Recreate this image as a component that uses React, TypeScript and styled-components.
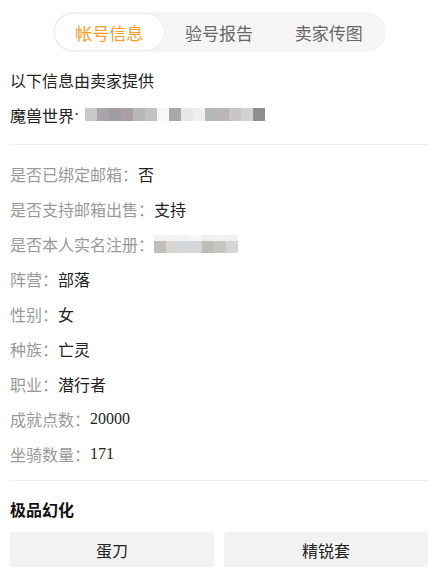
import styled, { createGlobalStyle } from "styled-components"

const GlobalStyle = createGlobalStyle`
    body {
        margin: 0;
        background: #fff;
        font-family: "Liberation Serif", "Noto Sans CJK SC", serif;
        color: #222;
    }
`

const Page = styled.div`
    padding: 12px 10px 0;
    width: 438px;
    box-sizing: border-box;
`

const TabBar = styled.div`
    display: grid;
    grid-template-columns: repeat(3, 1fr);
    width: 333px;
    height: 40px;
    margin: 0 auto 10px;
    padding: 2px;
    box-sizing: border-box;
    background: #f5f5f5;
    border-radius: 20px;
`

const Tab = styled.div<{ $active?: boolean }>`
    display: flex;
    align-items: center;
    justify-content: center;
    border-radius: 18px;
    font-family: "Noto Sans CJK SC", sans-serif;
    font-size: 17px;
    color: ${props => props.$active ? "#ff9a26" : "#666"};
    background: ${props => props.$active ? "#fff" : "transparent"};
    box-shadow: ${props => props.$active ? "0 0 2px rgba(0,0,0,0.12)" : "none"};
`

const Line = styled.div`
    display: flex;
    align-items: center;
    height: 35px;
    font-size: 16px;
    color: #222;
`

const Dot = styled.span`
    margin-right: 6px;
`

const Mosaic = styled.div`
    display: flex;
    flex-direction: column;
`

const MosaicRow = styled.div`
    display: flex;
`

const Cell = styled.span<{ $color: string; $h: number }>`
    display: block;
    width: 12px;
    height: ${props => props.$h}px;
    background: ${props => props.$color};
`

const Divider = styled.div<{ $top?: number }>`
    height: 1px;
    margin-top: ${props => props.$top ?? 0}px;
    background: #ececec;
`

const InfoList = styled.div`
    padding: 11px 0 9px;
`

const Label = styled.span`
    color: #999;
`

const Value = styled.span`
    color: #222;
`

const Heading = styled.div`
    display: flex;
    align-items: center;
    height: 35px;
    margin-top: 10px;
    font-family: "Noto Sans CJK SC", sans-serif;
    font-size: 16px;
    font-weight: bold;
    color: #111;
`

const ItemGrid = styled.div`
    display: grid;
    grid-template-columns: 1fr 1fr;
    gap: 10px;
    margin-top: 6px;
`

const Item = styled.div`
    display: flex;
    align-items: center;
    justify-content: center;
    height: 36px;
    background: #f2f2f2;
    border-radius: 4px;
    font-size: 16px;
    color: #222;
`

const gameMosaic = [
    "#c8c8c8", "#aaa5a8", "#a19ea3", "#ab9ea5", "#b7b7b9", "#c2c4c4", "#f8f7f7", "#a8a8a8",
    "#e6e7e9", "#eeeeed", "#b5b7b8", "#bcb7b7", "#c8c7c6", "#d3d2d1", "#8e8e92",
]

const nameTop = ["#f2f2f2", "#f4f3f3", "#f1f2f3", "#f6f6f6", "#eeeeed", "#f3f3f2", "#eff0f1"]
const nameBottom = ["#bfbfbb", "#d8d5d0", "#d3d8dc", "#d6d6d6", "#c0bcb8", "#c6c6c2", "#d3d5d6"]

const rows: [string, string][] = [
    ["是否已绑定邮箱：", "否"],
    ["是否支持邮箱出售：", "支持"],
    ["是否本人实名注册：", ""],
    ["阵营：", "部落"],
    ["性别：", "女"],
    ["种族：", "亡灵"],
    ["职业：", "潜行者"],
    ["成就点数：", "20000"],
    ["坐骑数量：", "171"],
]

const App = () => {
    return (
        <Page>
            <GlobalStyle />
            <TabBar>
                <Tab $active>帐号信息</Tab>
                <Tab>验号报告</Tab>
                <Tab>卖家传图</Tab>
            </TabBar>
            <Line>以下信息由卖家提供</Line>
            <Line>
                魔兽世界<Dot>·</Dot>
                <Mosaic>
                    <MosaicRow>
                        {gameMosaic.map((c, i) => <Cell key={i} $color={c} $h={13} />)}
                    </MosaicRow>
                </Mosaic>
            </Line>
            <Divider $top={12} />
            <InfoList>
                {rows.map(([label, value]) => (
                    <Line key={label}>
                        <Label>{label}</Label>
                        {value ? <Value>{value}</Value> : (
                            <Mosaic>
                                <MosaicRow>
                                    {nameTop.map((c, i) => <Cell key={i} $color={c} $h={6} />)}
                                </MosaicRow>
                                <MosaicRow>
                                    {nameBottom.map((c, i) => <Cell key={i} $color={c} $h={12} />)}
                                </MosaicRow>
                            </Mosaic>
                        )}
                    </Line>
                ))}
            </InfoList>
            <Divider />
            <Heading>极品幻化</Heading>
            <ItemGrid>
                <Item>蛋刀</Item>
                <Item>精锐套</Item>
            </ItemGrid>
        </Page>
    )
}

export default App
